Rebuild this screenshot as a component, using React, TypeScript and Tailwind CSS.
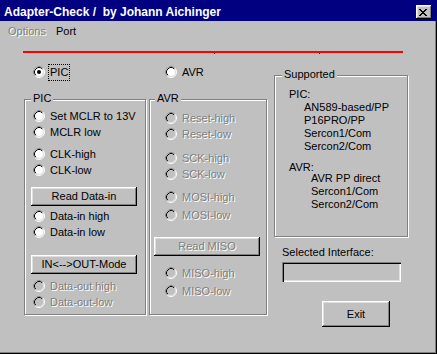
import React from 'react';

const RadioDot: React.FC<{ checked?: boolean; disabled?: boolean }> = ({ checked, disabled }) => (
  <svg width="12" height="12" viewBox="0 0 12 12" className="shrink-0">
    <circle cx="6" cy="6" r="5" fill={disabled ? '#c0c0c0' : '#fff'} />
    <circle cx="6" cy="6" r="5.5" fill="none" stroke="#fff" />
    <path d="M2.11 9.89A5.5 5.5 0 0 1 9.89 2.11" fill="none" stroke="#808080" />
    <circle cx="6" cy="6" r="4.5" fill="none" stroke="#dfdfdf" />
    <path d="M2.82 9.18A4.5 4.5 0 0 1 9.18 2.82" fill="none" stroke="#000" />
    {checked && <circle cx="6" cy="6" r="2" fill="#000" />}
  </svg>
);

interface RadioProps {
  label: string;
  checked?: boolean;
  disabled?: boolean;
  focus?: boolean;
  className?: string;
}

const Radio: React.FC<RadioProps> = ({ label, checked, disabled, focus, className }) => (
  <div className={`flex h-[16px] items-center gap-[5px] ${className ?? ''}`}>
    <RadioDot checked={checked} disabled={disabled} />
    <span
      className={`leading-[13px] ${disabled ? 'text-[#808080] [text-shadow:1px_1px_0_#fff]' : ''} ${
        focus ? 'outline outline-1 outline-dotted outline-black outline-offset-[1px]' : ''
      }`}
    >
      {label}
    </span>
  </div>
);

const Btn: React.FC<{ children: React.ReactNode; className?: string; disabled?: boolean }> = ({
  children,
  className,
  disabled,
}) => (
  <div
    className={`flex items-center justify-center bg-[#c0c0c0] leading-[13px] shadow-[inset_-1px_-1px_0_#000,inset_1px_1px_0_#fff,inset_-2px_-2px_0_#808080,inset_2px_2px_0_#dfdfdf] ${
      disabled ? 'text-[#808080] [text-shadow:1px_1px_0_#fff]' : ''
    } ${className ?? ''}`}
  >
    {children}
  </div>
);

const Group: React.FC<{ label: string; labelClass: string; className?: string; children: React.ReactNode }> = ({
  label,
  labelClass,
  className,
  children,
}) => (
  <div className={`relative border border-[#808080] shadow-[inset_1px_1px_0_#fff,1px_1px_0_#fff] ${className ?? ''}`}>
    <span className={`absolute top-[-8px] bg-[#c0c0c0] px-[2px] leading-[13px] ${labelClass}`}>{label}</span>
    {children}
  </div>
);

export default function App() {
  return (
    <div className="relative flex h-[354px] w-[437px] flex-col overflow-hidden bg-[#c0c0c0] font-['Liberation_Sans',Arial,sans-serif] text-[11px] text-black shadow-[inset_-1px_-1px_0_#000,inset_-2px_-2px_0_#808080]">
      {/* Title bar */}
      <div className="flex h-[21px] shrink-0 items-start justify-between bg-[#000080] pl-[4px] pr-[5px] pt-[5px]">
        <span className="whitespace-pre text-[12px] font-bold leading-[14px] text-white">
          Adapter-Check /  by Johann Aichinger
        </span>
        <div className="flex h-[14px] w-[16px] items-center justify-center bg-[#c0c0c0] pr-[2px] shadow-[inset_-1px_-1px_0_#000,inset_1px_1px_0_#fff,inset_-2px_-2px_0_#808080,inset_2px_2px_0_#dfdfdf]">
          <svg width="8" height="7" viewBox="0 0 8 7" shapeRendering="crispEdges">
            <path
              d="M0 0h2v1H0zM6 0h2v1H6zM1 1h2v1H1zM5 1h2v1H5zM2 2h4v1H2zM3 3h2v1H3zM2 4h4v1H2zM1 5h2v1H1zM5 5h2v1H5zM0 6h2v1H0zM6 6h2v1H6z"
              fill="#000"
            />
          </svg>
        </div>
      </div>

      {/* Menu */}
      <div className="flex h-[19px] shrink-0 items-start pt-[4px] leading-[13px]">
        <span className="ml-[8px] text-[#808080] [text-shadow:1px_1px_0_#fff]">Options</span>
        <span className="ml-[10px]">Port</span>
      </div>

      {/* Red separator */}
      <div className="relative ml-[23px] mt-[11px] h-[2px] w-[380px] shrink-0 bg-[#ff0000]">
        <span className="absolute left-[191px] top-[2px] h-px w-px bg-black" />
        <span className="absolute left-[296px] top-[2px] h-px w-px bg-black" />
      </div>

      <div className="mt-[11px] flex pl-[24px]">
        {/* PIC column */}
        <div className="w-[125px] shrink-0">
          <Radio label="PIC" checked focus className="pl-[9px]" />
          <Group label="PIC" labelClass="left-[6px]" className="mt-[19px] h-[216px] w-[122px] pl-[8px] pt-[8px]">
            <Radio label="Set MCLR to 13V" />
            <Radio label="MCLR low" />
            <Radio label="CLK-high" className="mt-[6px]" />
            <Radio label="CLK-low" />
            <Btn className="-ml-[2px] mt-[9px] h-[19px] w-[106px]">Read Data-in</Btn>
            <Radio label="Data-in high" className="mt-[2px]" />
            <Radio label="Data-in low" />
            <Btn className="-ml-[2px] mt-[15px] h-[19px] w-[106px]">{'IN<-->OUT-Mode'}</Btn>
            <Radio label="Data-out high" disabled className="mt-[4px]" />
            <Radio label="Data-out-low" disabled />
          </Group>
        </div>

        {/* AVR column */}
        <div className="w-[125px] shrink-0">
          <Radio label="AVR" className="pl-[16px]" />
          <Group label="AVR" labelClass="left-[5px]" className="mt-[19px] h-[216px] w-[118px] pl-[15px] pt-[10px]">
            <Radio label="Reset-high" disabled />
            <Radio label="Reset-low" disabled />
            <Radio label="SCK-high" disabled className="mt-[8px]" />
            <Radio label="SCK-low" disabled />
            <Radio label="MOSI-high" disabled className="mt-[7px]" />
            <Radio label="MOSI-low" disabled className="mt-[2px]" />
            <Btn disabled className="-ml-[11px] mt-[14px] h-[19px] w-[106px]">Read MISO</Btn>
            <Radio label="MISO-high" disabled className="mt-[9px]" />
            <Radio label="MISO-low" disabled className="mt-[2px]" />
          </Group>
        </div>

        {/* Right column */}
        <div className="flex shrink-0 flex-col">
          <Group label="Supported" labelClass="left-[7px]" className="mt-[11px] h-[162px] w-[134px] pl-[14px] pt-[12px] leading-[13px]">
            <div>PIC:</div>
            <div className="ml-[15px]">
              <div>AN589-based/PP</div>
              <div>P16PRO/PP</div>
              <div>Sercon1/Com</div>
              <div>Sercon2/Com</div>
            </div>
            <div className="mt-[8px]">AVR:</div>
            <div className="-mt-[2px] ml-[22px]">
              <div>AVR PP direct</div>
              <div>Sercon1/Com</div>
              <div>Sercon2/Com</div>
            </div>
          </Group>
          <div className="ml-[8px] mt-[9px] leading-[13px]">Selected Interface:</div>
          <div className="ml-[8px] mt-[3px] h-[20px] w-[119px] bg-[#c0c0c0] shadow-[inset_1px_1px_0_#808080,inset_2px_2px_0_#000,inset_-1px_-1px_0_#fff,inset_-2px_-2px_0_#dfdfdf]" />
          <Btn className="ml-[48px] mt-[19px] h-[26px] w-[68px]">Exit</Btn>
        </div>
      </div>
    </div>
  );
}
